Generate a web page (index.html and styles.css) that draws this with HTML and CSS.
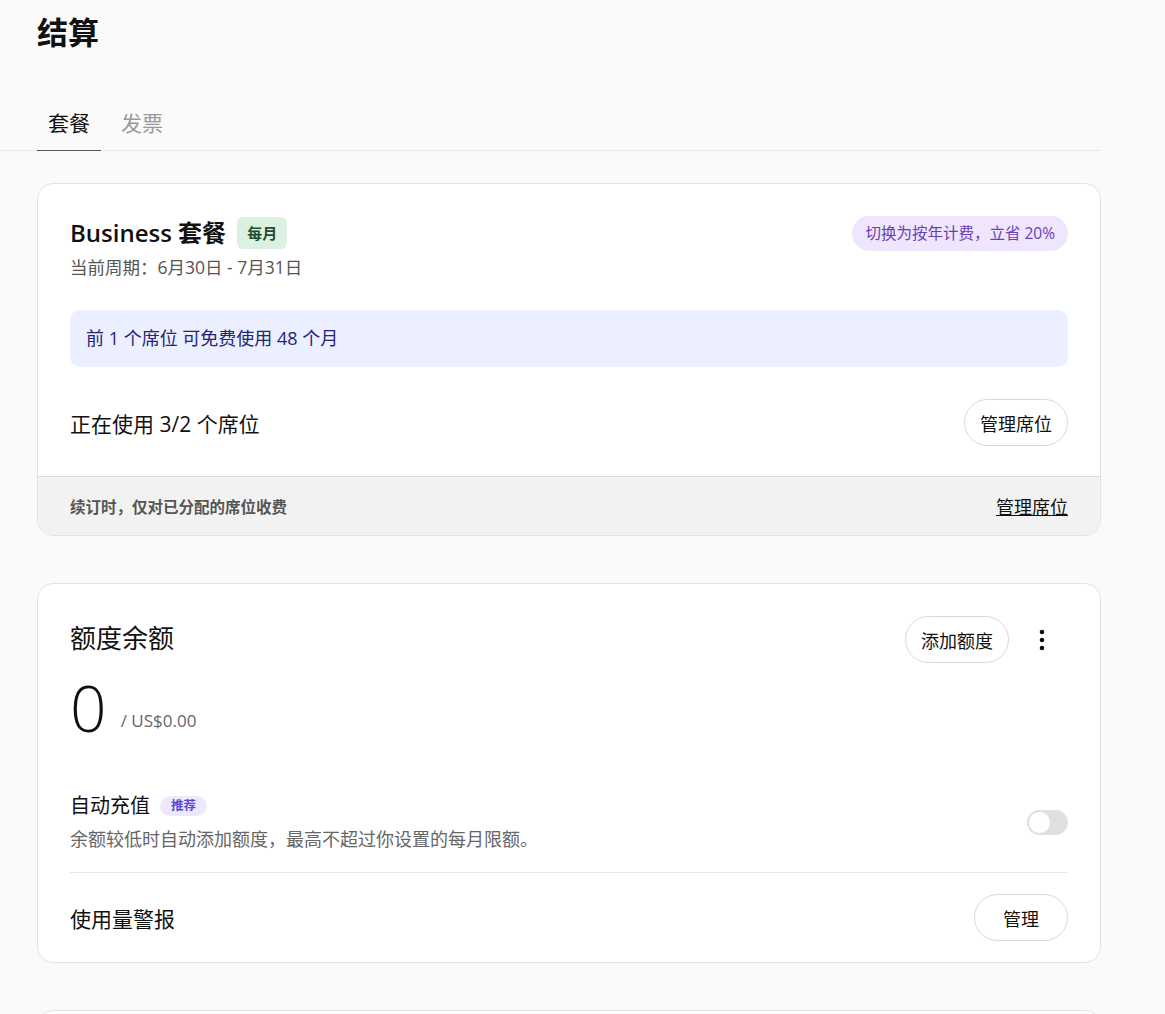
FILE: index.html
```html
<!DOCTYPE html>
<html lang="zh-CN">
<head>
    <meta charset="UTF-8">
    <meta name="viewport" content="width=device-width, initial-scale=1.0">
    <title>结算</title>
    <link rel="stylesheet" href="styles.css">
</head>
<body>
    <div class="page">
        <h1 class="page-title">结算</h1>

        <div class="tabs">
            <div class="tab active">套餐</div>
            <div class="tab">发票</div>
        </div>

        <div class="card">
            <div class="card-body">
                <div class="plan-head">
                    <div>
                        <div class="plan-title">
                            <span>Business 套餐</span>
                            <span class="badge-green">每月</span>
                        </div>
                        <div class="plan-period">当前周期：6月30日 - 7月31日</div>
                    </div>
                    <div class="pill-purple">切换为按年计费，立省 20%</div>
                </div>

                <div class="info-box">前 1 个席位 可免费使用 48 个月</div>

                <div class="row">
                    <div class="row-label">正在使用 3/2 个席位</div>
                    <button class="btn">管理席位</button>
                </div>
            </div>
            <div class="card-footer">
                <span class="footer-note">续订时，仅对已分配的席位收费</span>
                <a href="#" class="footer-link">管理席位</a>
            </div>
        </div>

        <div class="card">
            <div class="card-body card-body-tight">
                <div class="credit-head">
                    <div class="credit-title">额度余额</div>
                    <div class="credit-actions">
                        <button class="btn">添加额度</button>
                        <button class="kebab" aria-label="更多">
                            <svg width="6" height="22" viewBox="0 0 6 22">
                                <circle cx="3" cy="3" r="2.3" fill="#111"/>
                                <circle cx="3" cy="11" r="2.3" fill="#111"/>
                                <circle cx="3" cy="19" r="2.3" fill="#111"/>
                            </svg>
                        </button>
                    </div>
                </div>

                <div class="balance">
                    <span class="balance-num">0</span>
                    <span class="balance-sub">/ US$0.00</span>
                </div>

                <div class="auto-row">
                    <div>
                        <div class="auto-title">
                            <span>自动充值</span>
                            <span class="badge-purple">推荐</span>
                        </div>
                        <div class="auto-desc">余额较低时自动添加额度，最高不超过你设置的每月限额。</div>
                    </div>
                    <div class="toggle"><div class="knob"></div></div>
                </div>

                <div class="row alert-row">
                    <div class="row-label">使用量警报</div>
                    <button class="btn btn-wide">管理</button>
                </div>
            </div>
        </div>

        <div class="card card-stub"></div>
    </div>
</body>
</html>
```

FILE: styles.css
```css
body {
    margin: 0;
    background: #fafafa;
    color: #111;
    font-family: "Open Sans", "Noto Sans CJK SC", sans-serif;
}

.page {
    width: 1064px;
    padding: 0 0 0 37px;
}

.page-title {
    margin: 0;
    padding-top: 10px;
    font-size: 31px;
    font-weight: 700;
    line-height: 44px;
}

.tabs {
    display: flex;
    gap: 9px;
    margin: 54px 0 32px -37px;
    padding-left: 37px;
    border-bottom: 1px solid #e8e8e8;
}

.tab {
    padding: 0 11px 12px;
    font-size: 21px;
    line-height: 30px;
    color: #999;
    margin-bottom: -1px;
}

.tab.active {
    color: #111;
    border-bottom: 1px solid #555;
}

.card {
    background: #fff;
    border: 1px solid #e2e2e2;
    border-radius: 16px;
    overflow: hidden;
    margin-bottom: 47px;
}

.card-body {
    padding: 32px 32px 30px;
}

.card-body-tight {
    padding-bottom: 21px;
}

.plan-head {
    display: flex;
    justify-content: space-between;
    align-items: flex-start;
}

.plan-title {
    display: flex;
    align-items: center;
    gap: 11px;
    font-size: 24px;
    font-weight: 600;
    line-height: 34px;
}

.badge-green {
    background: #dcf1e2;
    color: #1d4d2c;
    font-size: 15px;
    font-weight: 700;
    padding: 0 10px;
    line-height: 32px;
    border-radius: 6px;
}

.plan-period {
    font-size: 17.5px;
    color: #555;
    line-height: 26px;
    margin-top: 4px;
}

.pill-purple {
    background: #efe5fc;
    color: #6a3fb5;
    font-size: 15.5px;
    line-height: 35px;
    padding: 0 13px;
    border-radius: 18px;
}

.info-box {
    margin-top: 30px;
    background: #ecefff;
    color: #23237a;
    font-size: 18px;
    line-height: 57px;
    padding: 0 16px;
    border-radius: 10px;
}

.row {
    display: flex;
    justify-content: space-between;
    align-items: center;
    margin-top: 32px;
}

.row-label {
    font-size: 21px;
}

.btn {
    font-family: inherit;
    font-size: 18px;
    color: #111;
    background: #fff;
    border: 1px solid #d8d8d8;
    border-radius: 24px;
    height: 47px;
    padding: 0 15px;
    cursor: pointer;
}

.btn-wide {
    padding: 0 28px;
}

.card-footer {
    display: flex;
    justify-content: space-between;
    align-items: center;
    background: #f2f2f2;
    border-top: 1px solid #dcdcdc;
    height: 58px;
    padding: 0 32px;
}

.footer-note {
    font-size: 15.5px;
    font-weight: 700;
    color: #555;
}

.footer-link {
    font-size: 18px;
    color: #111;
    text-decoration: underline;
}

.credit-head {
    display: flex;
    justify-content: space-between;
    align-items: center;
}

.credit-title {
    font-size: 26px;
    margin-top: -6px;
}

.credit-actions {
    display: flex;
    align-items: center;
    gap: 7px;
}

.kebab {
    width: 52px;
    background: none;
    border: none;
    padding: 0;
    display: flex;
    justify-content: center;
    cursor: pointer;
}

.balance {
    margin-top: 5px;
    height: 80px;
    line-height: 80px;
}

.balance-num {
    font-size: 64px;
    font-weight: 300;
}

.balance-sub {
    font-size: 17px;
    color: #666;
    margin-left: 10px;
    vertical-align: 5px;
}

.auto-row {
    display: flex;
    justify-content: space-between;
    align-items: center;
    margin-top: 44px;
    padding-bottom: 20px;
    border-bottom: 1px solid #e6e6e6;
}

.auto-title {
    display: flex;
    align-items: center;
    gap: 10px;
    font-size: 20px;
    line-height: 28px;
}

.badge-purple {
    background: #ede9fd;
    color: #5b45d6;
    font-size: 12.5px;
    font-weight: 700;
    padding: 0 11px;
    line-height: 20px;
    border-radius: 10px;
}

.auto-desc {
    font-size: 18px;
    line-height: 26px;
    color: #666;
    margin-top: 6px;
}

.toggle {
    width: 41px;
    height: 25px;
    border-radius: 13px;
    background: #e0e0e0;
    position: relative;
}

.knob {
    position: absolute;
    left: 2px;
    top: 2px;
    width: 21px;
    height: 21px;
    border-radius: 50%;
    background: #fff;
}

.alert-row {
    margin-top: 21px;
}

.card-stub {
    height: 60px;
}
```
